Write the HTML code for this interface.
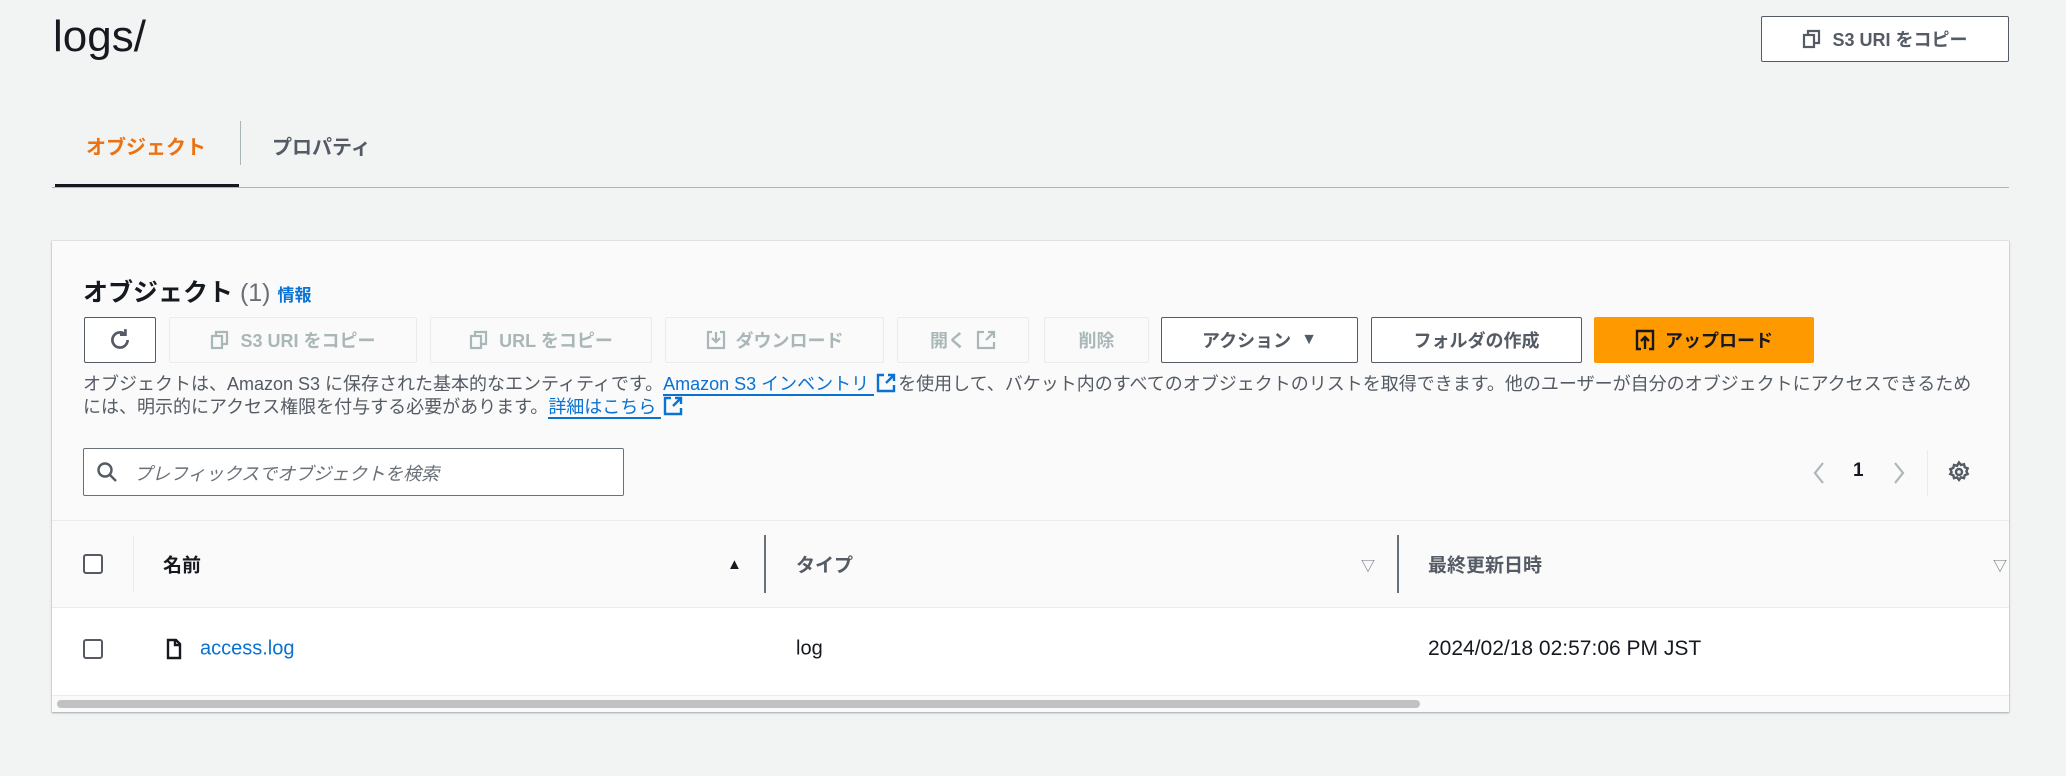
<!DOCTYPE html>
<html><head><meta charset="utf-8">
<style>
*{box-sizing:border-box;margin:0;padding:0}
body{width:2066px;height:776px;background:#f2f3f3;font-family:"Liberation Sans","Noto Sans CJK JP",sans-serif;color:#16191f;position:relative;overflow:hidden}
.a{position:absolute}
.btn{position:absolute;top:317px;height:46px;border:1.5px solid #545b64;border-radius:2px;background:#fff;color:#545b64;font-weight:bold;font-size:18px;display:flex;align-items:center;justify-content:center;gap:10px;white-space:nowrap}
.dis{border:1.5px solid #e9ebed;color:#aab7b8;background:#fafafa}
.desc{font-size:18px;color:#545b64;white-space:nowrap;left:83px}
.lnk{color:#0972d3;border-bottom:2px solid #0972d3}
.cb{position:absolute;width:20px;height:20px;border:2px solid #545b64;border-radius:3px;background:#fff}
.th{position:absolute;top:564px;transform:translateY(-50%);font-size:19px;font-weight:bold;color:#16191f}
.td{position:absolute;top:649px;transform:translateY(-50%);font-size:20px}
.ext{display:inline-block;vertical-align:-3px;margin:0 2px}
</style></head><body>
<div class="a" style="left:53px;top:12px;font-size:44px;color:#16191f">logs/</div>
<div class="btn" style="left:1761px;top:16px;width:248px;height:46px">
<svg width="20" height="20" viewBox="0 0 20 20" fill="none" stroke="#545b64" stroke-width="2.2"><rect x="2" y="6" width="10" height="12"/><path d="M6 6V2h11v12h-5"/></svg>S3 URI をコピー</div>

<div class="a" style="left:86px;top:131px;font-size:20px;font-weight:bold;color:#ec7211">オブジェクト</div>
<div class="a" style="left:240px;top:121px;width:1px;height:44px;background:#aab7b8"></div>
<div class="a" style="left:272px;top:131px;font-size:20px;font-weight:bold;color:#545b64">プロパティ</div>
<div class="a" style="left:55px;top:184px;width:184px;height:4px;background:#16191f"></div>
<div class="a" style="left:52px;top:187px;width:1957px;height:1px;background:#aab7b8"></div>

<div class="a" style="left:52px;top:241px;width:1957px;height:471px;background:#fafafa;box-shadow:0 1px 2px rgba(0,28,36,.3),0 0 0 1px #e4e6e8"></div>
<div class="a" style="left:83px;top:273px;font-size:25px;font-weight:bold;white-space:nowrap">オブジェクト <span style="font-weight:normal;color:#687078">(1)</span> <span style="font-size:17px;color:#0972d3">情報</span></div>

<div class="btn" style="left:84px;width:72px"><svg width="26" height="26" viewBox="0 0 24 24" fill="none" stroke="#545b64" stroke-width="2.5"><path d="M19 12a7 7 0 1 1-2.5-5.4"/><path d="M17 2v5h-5"/></svg></div>
<div class="btn dis" style="left:169px;width:248px"><svg width="20" height="20" viewBox="0 0 20 20" fill="none" stroke="#aab7b8" stroke-width="2.2"><rect x="2" y="6" width="10" height="12"/><path d="M6 6V2h11v12h-5"/></svg>S3 URI をコピー</div>
<div class="btn dis" style="left:430px;width:222px"><svg width="20" height="20" viewBox="0 0 20 20" fill="none" stroke="#aab7b8" stroke-width="2.2"><rect x="2" y="6" width="10" height="12"/><path d="M6 6V2h11v12h-5"/></svg>URL をコピー</div>
<div class="btn dis" style="left:665px;width:219px"><svg width="20" height="20" viewBox="0 0 20 20" fill="none" stroke="#aab7b8" stroke-width="2.2"><path d="M6 2H2v16h16V2h-4M10 2v10M6 8l4 4 4-4"/></svg>ダウンロード</div>
<div class="btn dis" style="left:897px;width:132px">開く <svg width="20" height="20" viewBox="0 0 20 20" fill="none" stroke="#aab7b8" stroke-width="2.2"><path d="M8 2H2v16h16v-6M12 2h6v6M18 2l-8 8"/></svg></div>
<div class="btn dis" style="left:1044px;width:105px">削除</div>
<div class="btn" style="left:1161px;width:197px">アクション <span style="font-size:16px">▼</span></div>
<div class="btn" style="left:1371px;width:211px">フォルダの作成</div>
<div class="btn" style="left:1594px;width:220px;background:#ff9900;border-color:#ff9900;color:#16191f"><svg width="20" height="22" viewBox="0 0 20 22" fill="none" stroke="#16191f" stroke-width="2.4"><path d="M6 20H2V2h16v18h-4M10 20V8M6 12l4-4 4 4"/></svg>アップロード</div>

<div class="a desc" style="top:370px">オブジェクトは、Amazon S3 に保存された基本的なエンティティです。<span class="lnk">Amazon S3 インベントリ </span><svg class="ext" width="20" height="20" viewBox="0 0 20 20" fill="none" stroke="#0972d3" stroke-width="2.4"><path d="M8 2H2v16h16v-6M12 2h6v6M18 2l-8 8"/></svg>を使用して、バケット内のすべてのオブジェクトのリストを取得できます。他のユーザーが自分のオブジェクトにアクセスできるため</div>
<div class="a desc" style="top:393px">には、明示的にアクセス権限を付与する必要があります。<span class="lnk">詳細はこちら </span><svg class="ext" width="20" height="20" viewBox="0 0 20 20" fill="none" stroke="#0972d3" stroke-width="2.4"><path d="M8 2H2v16h16v-6M12 2h6v6M18 2l-8 8"/></svg></div>

<div class="a" style="left:83px;top:448px;width:541px;height:48px;border:1.5px solid #687078;border-radius:2px;background:#fff"></div>
<svg class="a" style="left:96px;top:461px" width="22" height="22" viewBox="0 0 22 22" fill="none" stroke="#545b64" stroke-width="2.4"><circle cx="9" cy="9" r="6.5"/><path d="M14 14l6 6"/></svg>
<div class="a" style="left:134px;top:460px;font-size:18px;font-style:italic;color:#687078">プレフィックスでオブジェクトを検索</div>

<svg class="a" style="left:1812px;top:461px" width="14" height="24" viewBox="0 0 14 24" fill="none" stroke="#aab7b8" stroke-width="2.2"><path d="M11 2L3 12l8 10"/></svg>
<div class="a" style="left:1853px;top:460px;font-size:19px;font-weight:bold">1</div>
<svg class="a" style="left:1892px;top:461px" width="14" height="24" viewBox="0 0 14 24" fill="none" stroke="#aab7b8" stroke-width="2.2"><path d="M3 2l8 10-8 10"/></svg>
<div class="a" style="left:1927px;top:450px;width:1px;height:46px;background:#e9ebed"></div>
<svg class="a" style="left:1947px;top:460px" width="24" height="24" viewBox="0 0 24 24" fill="none" stroke="#545b64" stroke-width="2.4"><circle cx="12" cy="12" r="3"/><path d="M12 2.5l2 2.5 3-.8.7 3 3 1.2-1.3 2.8 1.3 2.8-3 1.2-.7 3-3-.8-2 2.5-2-2.5-3 .8-.7-3-3-1.2L4.6 12 3.3 9.2l3-1.2.7-3 3 .8z"/></svg>

<div class="a" style="left:52px;top:520px;width:1957px;height:1px;background:#e9ebed"></div>
<div class="a" style="left:52px;top:607px;width:1957px;height:89px;background:#fff;border-top:1px solid #e9ebed;border-bottom:1px solid #e9ebed"></div>
<div class="cb" style="left:83px;top:554px"></div>
<div class="a" style="left:133px;top:535px;width:1px;height:58px;background:#e9ebed"></div>
<div class="th" style="left:163px">名前</div>
<div class="a" style="left:727px;top:556px;font-size:15px">▲</div>
<div class="a" style="left:764px;top:535px;width:1.5px;height:58px;background:#687078"></div>
<div class="th" style="left:796px;color:#545b64">タイプ</div>
<div class="a" style="left:1361px;top:556px;font-size:14px;color:#687078">▽</div>
<div class="a" style="left:1397px;top:535px;width:1.5px;height:58px;background:#687078"></div>
<div class="th" style="left:1428px;color:#545b64">最終更新日時</div>
<div class="a" style="left:1993px;top:556px;font-size:14px;color:#687078">▽</div>

<div class="cb" style="left:83px;top:639px"></div>
<svg class="a" style="left:166px;top:638px" width="16" height="22" viewBox="0 0 16 22" fill="none" stroke="#16191f" stroke-width="2.4"><path d="M2 2h8l4 4v14H2z"/><path d="M9 2v5h5" /></svg>
<div class="td" style="left:200px;color:#0972d3">access.log</div>
<div class="td" style="left:796px">log</div>
<div class="td" style="left:1428px;font-size:21px">2024/02/18 02:57:06 PM JST</div>

<div class="a" style="left:57px;top:700px;width:1363px;height:8px;border-radius:4px;background:#c1c1c1"></div>
</body></html>
